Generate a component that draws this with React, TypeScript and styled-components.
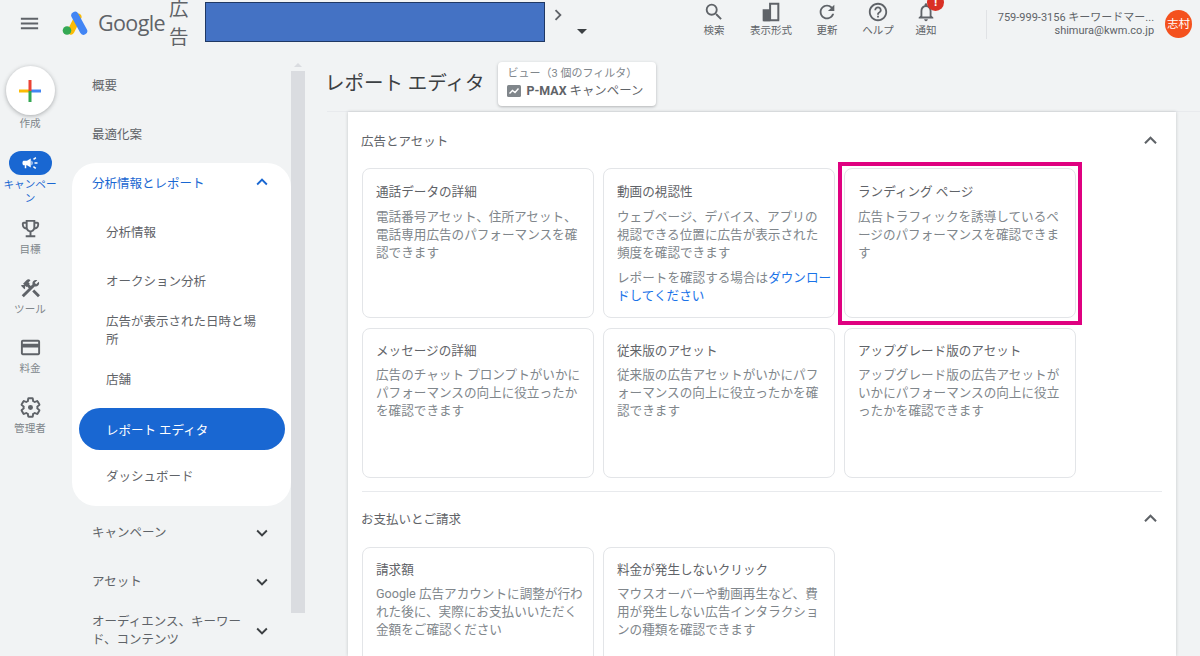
import styled, { createGlobalStyle, css } from 'styled-components'
import {
  MdMenu,
  MdSearch,
  MdRefresh,
  MdHelpOutline,
  MdNotificationsNone,
  MdCampaign,
  MdOutlineEmojiEvents,
  MdConstruction,
  MdOutlineCreditCard,
  MdExpandLess,
  MdExpandMore,
  MdChevronRight,
  MdArrowDropDown
} from 'react-icons/md'

const GlobalStyle = createGlobalStyle`
  html, body {
    margin: 0;
    height: 656px;
    overflow: hidden;
    background: #f1f3f4;
    font-family: Roboto, "Noto Sans CJK JP", sans-serif;
    color: #3c4043;
  }
  * { box-sizing: border-box; }
`

const Page = styled.div`
  width: 1200px;
  height: 656px;
  display: flex;
  flex-direction: column;
  overflow: hidden;
`

const Header = styled.header`
  height: 60px;
  flex: none;
  display: flex;
  align-items: flex-start;
  position: relative;
`

const MenuButton = styled.div`
  width: 62px;
  height: 46px;
  padding-left: 18px;
  display: flex;
  align-items: center;
  color: #5f6368;
  font-size: 23px;
`

const LogoMark = styled.svg`
  width: 27px;
  height: 24px;
  margin-top: 11px;
  flex: none;
`

const Wordmark = styled.span`
  margin-left: 9px;
  margin-top: 5px;
  font-family: "Open Sans", sans-serif;
  font-size: 21.5px;
  line-height: 36px;
  letter-spacing: -0.6px;
  color: #5f6368;
`

const ProductName = styled.span`
  width: 22px;
  margin-left: 4px;
  margin-top: -4px;
  font-size: 19.5px;
  line-height: 28px;
  color: #5f6368;
  flex: none;
`

const RedactedBox = styled.div`
  width: 340px;
  height: 40px;
  margin-left: 14px;
  margin-top: 2px;
  background: #4472c4;
  border: 1px solid #1f3864;
  flex: none;
`

const Crumb = styled.div`
  width: 26px;
  margin-left: 0;
  margin-top: 4px;
  color: #5f6368;
  font-size: 22px;
  display: flex;
  justify-content: center;
`

const Caret = styled.div`
  width: 24px;
  margin-left: -1px;
  margin-top: 19px;
  color: #3c4043;
  font-size: 24px;
  display: flex;
  justify-content: center;
`

const Actions = styled.div`
  margin-left: 97px;
  display: flex;
  flex: none;
`

const Action = styled.div<{ $width: number }>`
  width: ${(p) => p.$width}px;
  position: relative;
  display: flex;
  flex-direction: column;
  align-items: center;
  padding-top: 1px;
  font-size: 10.5px;
  line-height: 14px;
  color: #5f6368;

  svg {
    width: 22px;
    height: 22px;
    margin-bottom: 1px;
  }
`

const Badge = styled.span`
  position: absolute;
  top: -6px;
  left: 20px;
  width: 17px;
  height: 17px;
  border-radius: 50%;
  background: #d93025;
  color: #fff;
  font-size: 12px;
  font-weight: 700;
  line-height: 17px;
  text-align: center;
`

const Account = styled.div`
  margin-left: 41px;
  margin-top: 10px;
  height: 29px;
  width: 168px;
  border-left: 1px solid #e0e2e5;
  text-align: right;
  font-size: 11px;
  line-height: 13px;
  padding-top: 1px;
  color: #5f6368;
  flex: none;
`

const Avatar = styled.div`
  width: 27px;
  height: 28px;
  margin-left: 11px;
  margin-top: 10px;
  border-radius: 50%;
  background: #f4511e;
  color: #fff;
  font-size: 11.5px;
  line-height: 28px;
  text-align: center;
  flex: none;
`

const Body = styled.div`
  flex: 1;
  min-height: 0;
  display: flex;
`

const Rail = styled.nav`
  width: 60px;
  flex: none;
  display: flex;
  flex-direction: column;
  align-items: center;
  padding-top: 6px;
`

const CreateButton = styled.div`
  width: 49px;
  height: 49px;
  border-radius: 50%;
  background: #fff;
  box-shadow: 0 1px 4px rgba(60, 64, 67, 0.4);
  display: flex;
  align-items: center;
  justify-content: center;
  margin-bottom: 2px;
`

const RailItem = styled.div<{ $height: number }>`
  width: 60px;
  height: ${(p) => p.$height}px;
  display: flex;
  flex-direction: column;
  align-items: center;
  font-size: 10.6px;
  line-height: 14px;
  color: #80868b;
  text-align: center;

  svg {
    width: 23px;
    height: 23px;
    color: #5f6368;
    flex: none;
    margin-bottom: 3px;
  }
`

const RailPill = styled.div`
  width: 43px;
  height: 24px;
  border-radius: 12px;
  background: #1967d2;
  display: flex;
  align-items: center;
  justify-content: center;
  margin-bottom: 3px;

  svg {
    width: 18px;
    height: 18px;
    color: #fff;
    margin: 0;
  }
`

const RailLabelActive = styled.span`
  color: #1967d2;
  width: 58px;
`

const SideNav = styled.div`
  width: 219px;
  margin-left: 12px;
  padding-top: 1px;
  flex: none;
  display: flex;
  flex-direction: column;
`

const NavRow = styled.div<{ $sub?: boolean }>`
  height: 49px;
  flex: none;
  display: flex;
  align-items: center;
  justify-content: space-between;
  padding: 0 18px 0 ${(p) => (p.$sub ? 34 : 20)}px;
  font-size: 12.5px;
  line-height: 18px;
  color: #5f6368;

  svg {
    width: 22px;
    height: 22px;
    flex: none;
    color: #3c4043;
  }
`

const NavText = styled.span`
  width: 158px;
`

const NavWideText = styled.span`
  width: 160px;
`

const NavGroup = styled.div`
  margin-top: 4px;
  margin-bottom: 2px;
  padding-bottom: 5px;
  background: #fff;
  border-radius: 24px;
  flex: none;
`

const NavGroupHead = styled.div`
  height: 38px;
  margin-bottom: 7px;
  display: flex;
  align-items: center;
  justify-content: space-between;
  padding: 0 18px 0 20px;
  font-size: 12.5px;
  color: #1967d2;

  svg {
    width: 22px;
    height: 22px;
  }
`

const ActivePill = styled.div`
  height: 42px;
  margin: 4px 6px 2px 7px;
  padding-left: 27px;
  display: flex;
  align-items: center;
  border-radius: 21px;
  background: #1967d2;
  color: #fff;
  font-size: 12.5px;
`

const ScrollBar = styled.div`
  width: 14px;
  flex: none;
  padding-top: 3px;
  padding-bottom: 43px;
  display: flex;
  flex-direction: column;
  align-items: center;
`

const ScrollArrow = styled.div`
  width: 0;
  height: 0;
  margin-bottom: 4px;
  border-left: 4px solid transparent;
  border-right: 4px solid transparent;
  border-bottom: 4px solid #dadce0;
`

const ScrollThumb = styled.div`
  flex: 1;
  align-self: stretch;
  background: #dadce0;
`

const Main = styled.main`
  flex: 1;
  min-width: 0;
  display: flex;
  flex-direction: column;
`

const TitleRow = styled.div`
  height: 52px;
  flex: none;
  margin-left: 22px;
  padding-top: 2px;
  display: flex;
  align-items: flex-start;
  border-bottom: 1px solid #e8eaed;
`

const PageTitle = styled.h1`
  margin: 7px 14px 0 -2px;
  font-size: 19.5px;
  line-height: 30px;
  font-weight: 400;
  color: #3c4043;
`

const ViewChip = styled.div`
  width: 158px;
  height: 44px;
  padding: 5px 9px;
  background: #fff;
  border-radius: 4px;
  box-shadow: 0 1px 3px rgba(60, 64, 67, 0.35);
`

const ViewLabel = styled.div`
  font-size: 11px;
  line-height: 14px;
  color: #80868b;
`

const ViewValue = styled.div`
  margin-top: 1px;
  display: flex;
  align-items: center;
  gap: 5px;
  font-size: 12.4px;
  line-height: 17px;
  color: #5f6368;
  white-space: nowrap;

  b {
    font-weight: 700;
  }
`

const Panel = styled.div`
  width: 828px;
  margin-left: 43px;
  flex: 1;
  min-height: 0;
  padding: 1px 14px 0;
  background: #fff;
  box-shadow: 0 0 3px rgba(60, 64, 67, 0.25);
  overflow: hidden;
`

const SectionHead = styled.div<{ $lift?: boolean }>`
  width: 800px;
  height: 55px;
  display: flex;
  align-items: center;
  justify-content: space-between;
  padding-bottom: ${(p) => (p.$lift ? 3 : 0)}px;
  font-size: 12.5px;
  color: #5f6368;
  margin-left: -1px;

  svg {
    width: 25px;
    height: 25px;
    color: #5f6368;
    margin-right: -2px;
  }
`

const CardGrid = styled.div`
  display: grid;
  grid-template-columns: repeat(3, 232px);
  grid-auto-rows: 150px;
  column-gap: 9px;
  row-gap: 10px;
`

const CardTitle = styled.div<{ $tight?: boolean }>`
  font-size: 12.6px;
  line-height: 18px;
  color: #5f6368;
  margin-top: ${(p) => (p.$tight ? -1 : 0)}px;
  margin-bottom: ${(p) => (p.$tight ? 6 : 7)}px;
`

const Card = styled.div<{ $marked?: boolean }>`
  position: relative;
  padding: 14px 9px 14px 13px;
  border: 1px solid #e3e5e8;
  border-radius: 8px;
  background: #fff;

  ${(p) =>
    p.$marked &&
    css`
      &::after {
        content: '';
        position: absolute;
        inset: -7px -7px -8px -7px;
        border: 4px solid #df0080;
      }
    `}
`

const CardText = styled.p`
  margin: 0;
  font-size: 12.6px;
  line-height: 18px;
  color: #80868b;
  line-break: anywhere;
`

const CardNote = styled(CardText)`
  margin-top: 7px;
  margin-right: -8px;

  a {
    color: #1a73e8;
    text-decoration: none;
  }
`

const Divider = styled.div`
  width: 800px;
  height: 1px;
  margin-top: 13px;
  background: #e8eaed;
`

type CardItem = { title: string; text: string; marked?: boolean; note?: boolean; tight?: boolean }

const adCards: CardItem[] = [
  {
    title: '通話データの詳細',
    text: '電話番号アセット、住所アセット、電話専用広告のパフォーマンスを確認できます'
  },
  {
    title: '動画の視認性',
    text: 'ウェブページ、デバイス、アプリの視認できる位置に広告が表示された頻度を確認できます',
    note: true
  },
  {
    title: 'ランディング ページ',
    text: '広告トラフィックを誘導しているページのパフォーマンスを確認できます',
    marked: true
  },
  {
    title: 'メッセージの詳細',
    text: '広告のチャット プロンプトがいかにパフォーマンスの向上に役立ったかを確認できます',
    tight: true
  },
  {
    title: '従来版のアセット',
    text: '従来版の広告アセットがいかにパフォーマンスの向上に役立ったかを確認できます',
    tight: true
  },
  {
    title: 'アップグレード版のアセット',
    text: 'アップグレード版の広告アセットがいかにパフォーマンスの向上に役立ったかを確認できます',
    tight: true
  }
]

const billingCards: CardItem[] = [
  {
    title: '請求額',
    text: 'Google 広告アカウントに調整が行われた後に、実際にお支払いいただく金額をご確認ください',
    tight: true
  },
  {
    title: '料金が発生しないクリック',
    text: 'マウスオーバーや動画再生など、費用が発生しない広告インタラクションの種類を確認できます',
    tight: true
  }
]

function ReportCard({ item }: { item: CardItem }) {
  return (
    <Card $marked={item.marked}>
      <CardTitle $tight={item.tight}>{item.title}</CardTitle>
      <CardText>{item.text}</CardText>
      {item.note && (
        <CardNote>
          レポートを確認する場合は<a href="#">ダウンロードしてください</a>
        </CardNote>
      )}
    </Card>
  )
}

function ViewsIcon() {
  return (
    <svg viewBox="0 0 24 24" fill="none" stroke="currentColor" strokeWidth="2.2">
      <path d="M4 21V10h7v11M11 21V3h9v18M3 21h18" />
      <path d="M5 12h5v9H5z" fill="currentColor" />
    </svg>
  )
}

function GearIcon() {
  return (
    <svg viewBox="0 0 24 24" fill="none" stroke="currentColor" strokeWidth="2">
      <path d="M19.14 12.94c.04-.3.06-.61.06-.94 0-.32-.02-.64-.07-.94l2.03-1.58c.18-.14.23-.41.12-.61l-1.92-3.32c-.12-.22-.37-.29-.59-.22l-2.39.96c-.5-.38-1.03-.7-1.62-.94l-.36-2.54c-.04-.24-.24-.41-.48-.41h-3.84c-.24 0-.43.17-.47.41l-.36 2.54c-.59.24-1.13.57-1.62.94l-2.39-.96c-.22-.08-.47 0-.59.22L2.74 8.87c-.12.21-.08.47.12.61l2.03 1.58c-.05.3-.09.63-.09.94s.02.64.07.94l-2.03 1.58c-.18.14-.23.41-.12.61l1.92 3.32c.12.22.37.29.59.22l2.39-.96c.5.38 1.03.7 1.62.94l.36 2.54c.05.24.24.41.48.41h3.84c.24 0 .44-.17.47-.41l.36-2.54c.59-.24 1.13-.56 1.62-.94l2.39.96c.22.08.47 0 .59-.22l1.92-3.32c.12-.22.07-.47-.12-.61l-2.01-1.58z" />
      <circle cx="12" cy="12" r="2.6" fill="currentColor" stroke="none" />
    </svg>
  )
}

export default function App() {
  return (
    <Page>
      <GlobalStyle />
      <Header>
        <MenuButton>
          <MdMenu />
        </MenuButton>
        <LogoMark viewBox="0 0 27 24">
          <path d="M9 20 16 6" stroke="#fbbc04" strokeWidth="7" strokeLinecap="round" />
          <path d="M13 4.5 21.5 20" stroke="#4285f4" strokeWidth="7.5" strokeLinecap="round" />
          <circle cx="5" cy="19.5" r="4.3" fill="#34a853" />
        </LogoMark>
        <Wordmark>Google</Wordmark>
        <ProductName>広告</ProductName>
        <RedactedBox />
        <Crumb>
          <MdChevronRight />
        </Crumb>
        <Caret>
          <MdArrowDropDown />
        </Caret>
        <Actions>
          <Action $width={46}>
            <MdSearch />
            検索
          </Action>
          <Action $width={68}>
            <ViewsIcon />
            表示形式
          </Action>
          <Action $width={44}>
            <MdRefresh />
            更新
          </Action>
          <Action $width={58}>
            <MdHelpOutline />
            ヘルプ
          </Action>
          <Action $width={38}>
            <MdNotificationsNone />
            <Badge>!</Badge>
            通知
          </Action>
        </Actions>
        <Account>
          759-999-3156 キーワードマー...
          <br />
          shimura@kwm.co.jp
        </Account>
        <Avatar>志村</Avatar>
      </Header>
      <Body>
        <Rail>
          <CreateButton>
            <svg width="24" height="24" viewBox="0 0 24 24">
              <rect x="1" y="10.5" width="11" height="3" fill="#fbbc04" />
              <rect x="12" y="10.5" width="11" height="3" fill="#4285f4" />
              <rect x="10.5" y="1" width="3" height="11" fill="#ea4335" />
              <rect x="10.5" y="12" width="3" height="11" fill="#34a853" />
            </svg>
          </CreateButton>
          <RailItem $height={34}>作成</RailItem>
          <RailItem $height={66}>
            <RailPill>
              <MdCampaign />
            </RailPill>
            <RailLabelActive>キャンペーン</RailLabelActive>
          </RailItem>
          <RailItem $height={60}>
            <MdOutlineEmojiEvents />
            目標
          </RailItem>
          <RailItem $height={59}>
            <MdConstruction />
            ツール
          </RailItem>
          <RailItem $height={60}>
            <MdOutlineCreditCard />
            料金
          </RailItem>
          <RailItem $height={60}>
            <GearIcon />
            管理者
          </RailItem>
        </Rail>
        <SideNav>
          <NavRow>概要</NavRow>
          <NavRow>最適化案</NavRow>
          <NavGroup>
            <NavGroupHead>
              分析情報とレポート
              <MdExpandLess />
            </NavGroupHead>
            <NavRow $sub>分析情報</NavRow>
            <NavRow $sub>オークション分析</NavRow>
            <NavRow $sub>
              <NavWideText>広告が表示された日時と場所</NavWideText>
            </NavRow>
            <NavRow $sub>店舗</NavRow>
            <ActivePill>レポート エディタ</ActivePill>
            <NavRow $sub>ダッシュボード</NavRow>
          </NavGroup>
          <NavRow>
            キャンペーン
            <MdExpandMore />
          </NavRow>
          <NavRow>
            アセット
            <MdExpandMore />
          </NavRow>
          <NavRow>
            <NavText>オーディエンス、キーワード、コンテンツ</NavText>
            <MdExpandMore />
          </NavRow>
        </SideNav>
        <ScrollBar>
          <ScrollArrow />
          <ScrollThumb />
        </ScrollBar>
        <Main>
          <TitleRow>
            <PageTitle>レポート エディタ</PageTitle>
            <ViewChip>
              <ViewLabel>ビュー（3 個のフィルタ）</ViewLabel>
              <ViewValue>
                <svg width="14" height="14" viewBox="0 0 14 14">
                  <rect width="14" height="12" y="1" rx="1.5" fill="#80868b" />
                  <path d="M2.5 9.5 5.5 6.5 8 8.5 11.5 4.5" stroke="#fff" strokeWidth="1.4" fill="none" />
                </svg>
                <span>
                  <b>P-MAX</b> キャンペーン
                </span>
              </ViewValue>
            </ViewChip>
          </TitleRow>
          <Panel>
            <SectionHead>
              広告とアセット
              <MdExpandLess />
            </SectionHead>
            <CardGrid>
              {adCards.map((item) => (
                <ReportCard key={item.title} item={item} />
              ))}
            </CardGrid>
            <Divider />
            <SectionHead $lift>
              お支払いとご請求
              <MdExpandLess />
            </SectionHead>
            <CardGrid>
              {billingCards.map((item) => (
                <ReportCard key={item.title} item={item} />
              ))}
            </CardGrid>
          </Panel>
        </Main>
      </Body>
    </Page>
  )
}
